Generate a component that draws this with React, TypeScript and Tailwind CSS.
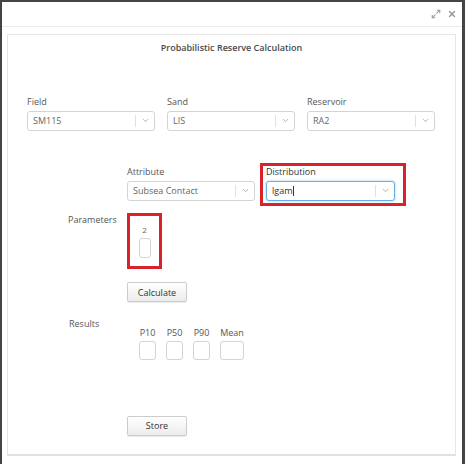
import { Maximize2, X, ChevronDown } from "lucide-react"

const FONT = { fontFamily: '"Open Sans", "Noto Sans", sans-serif' }

function Select({ value, width = "w-[128px]", focus = false }: { value: string; width?: string; focus?: boolean }) {
  return (
    <div
      className={`${width} h-[20px] flex items-center rounded-[3px] border bg-white ${
        focus ? "border-[#66afe9] shadow-[0_0_3px_rgba(102,175,233,0.6)]" : "border-[#d4d4d4]"
      }`}
    >
      <div className={`flex-1 pl-[5px] text-[9px] ${focus ? "text-[#333]" : "text-[#666]"}`}>
        {value}
        {focus && <span className="inline-block w-px h-[10px] bg-[#333] align-middle" />}
      </div>
      <div className="w-[19px] h-[12px] border-l border-[#e0e0e0] flex items-center justify-center">
        <ChevronDown className="w-[9px] h-[9px] text-[#999]" strokeWidth={2} />
      </div>
    </div>
  )
}

function Label({ children, dark = false }: { children: React.ReactNode; dark?: boolean }) {
  return <div className={`text-[9px] leading-[12px] mb-[3px] ${dark ? "text-[#333]" : "text-[#555]"}`}>{children}</div>
}

function Box({ w = "w-[17px]" }: { w?: string }) {
  return <div className={`${w} h-[19px] rounded-[3px] border border-[#d4d4d4] bg-white`} />
}

function Button({ label }: { label: string }) {
  return (
    <button className="w-[60px] h-[20px] rounded-[2px] border border-[#ccc] bg-gradient-to-b from-white to-[#ececec] text-[9px] text-[#333] shadow-[0_1px_1px_rgba(0,0,0,0.08)]">
      {label}
    </button>
  )
}

export default function App() {
  return (
    <div
      style={FONT}
      className="w-[465px] h-[464px] bg-white border-l-2 border-t-2 border-r-[3px] border-[#444] flex flex-col overflow-hidden"
    >
      <div className="h-[25px] shrink-0 border-b border-[#ebebeb] flex items-center justify-end gap-[6px] pr-[5px]">
        <Maximize2 className="w-[10px] h-[10px] text-[#999]" strokeWidth={2.5} />
        <X className="w-[10px] h-[10px] text-[#999]" strokeWidth={3.5} />
      </div>

      <div className="ml-[5px] mr-[6px] mt-[7px] h-[422px] border border-[#e6e6e6] border-b-2 border-b-[#e0e0e0] flex flex-col">
        <div className="pt-[6px] text-center text-[9px] font-semibold text-[#4a4a4a]">Probabilistic Reserve Calculation</div>

        <div className="mt-[41px] pl-[19px] flex gap-[12px]">
          <div>
            <Label>Field</Label>
            <Select value="SM115" />
          </div>
          <div>
            <Label>Sand</Label>
            <Select value="LIS" />
          </div>
          <div>
            <Label>Reservoir</Label>
            <Select value="RA2" />
          </div>
        </div>

        <div className="mt-[35px] pl-[119px] flex gap-[11px]">
          <div>
            <Label>Attribute</Label>
            <Select value="Subsea Contact" />
          </div>
          <div className="relative">
            <Label dark>Distribution</Label>
            <Select value="lgam" width="w-[129px]" focus />
            <div className="absolute left-[-6px] top-[-3px] w-[146px] h-[43px] border-[3px] border-[#d9222a]" />
          </div>
        </div>

        <div className="mt-[12px] pl-[60px] flex">
          <div className="w-[59px] text-[9px] text-[#555]">Parameters</div>
          <div className="relative w-[35px] h-[56px] flex flex-col items-center pt-[12px]">
            <div className="text-[8px] leading-[10px] text-[#666] mb-[3px]">2</div>
            <div className="w-[12px] h-[20px] rounded-[3px] border border-[#d4d4d4]" />
            <div className="absolute inset-0 border-[3px] border-[#d9222a]" />
          </div>
        </div>

        <div className="mt-[9px] pl-[119px]">
          <Button label="Calculate" />
        </div>

        <div className="mt-[15px] pl-[61px] flex">
          <div className="w-[70px] text-[9px] text-[#555]">Results</div>
          <div className="mt-[10px] flex gap-[10px] text-[9px] text-[#555]">
            <div className="flex flex-col items-center gap-[2px]">
              <span className="leading-[12px]">P10</span>
              <Box />
            </div>
            <div className="flex flex-col items-center gap-[2px]">
              <span className="leading-[12px]">P50</span>
              <Box />
            </div>
            <div className="flex flex-col items-center gap-[2px]">
              <span className="leading-[12px]">P90</span>
              <Box />
            </div>
            <div className="flex flex-col items-center gap-[2px]">
              <span className="leading-[12px]">Mean</span>
              <Box w="w-[24px]" />
            </div>
          </div>
        </div>

        <div className="mt-[51px] pl-[119px]">
          <Button label="Store" />
        </div>
      </div>
    </div>
  )
}
